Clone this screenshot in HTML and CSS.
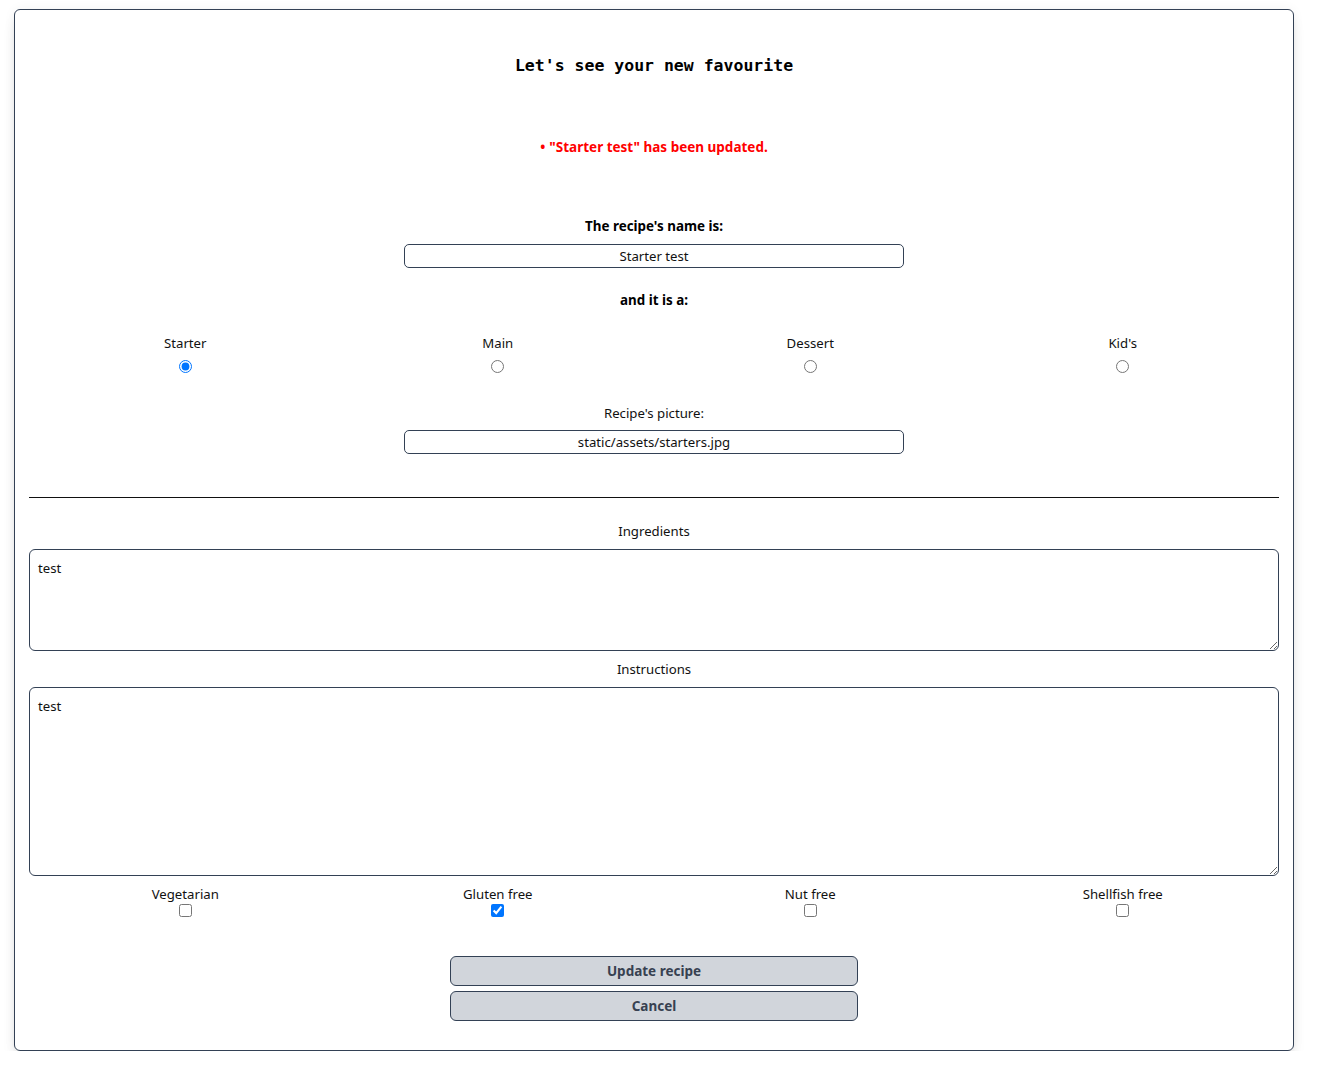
FILE: index.html
```html
<!DOCTYPE html>
<html lang="en">
<head>
<meta charset="utf-8">
<title>Edit recipe</title>
<link rel="stylesheet" href="styles.css">
</head>
<body>
<main class="card">
  <h1 class="title">Let's see your new favourite</h1>
  <ul class="flashes">
    <li>"Starter test" has been updated.</li>
  </ul>
  <form class="form">
    <label class="label bold name-label" for="name">The recipe's name is:</label>
    <input class="text-input" id="name" type="text" value="Starter test">
    <p class="label bold type-label">and it is a:</p>
    <div class="options radios">
      <label class="option"><span>Starter</span><input type="radio" name="type" checked></label>
      <label class="option"><span>Main</span><input type="radio" name="type"></label>
      <label class="option"><span>Dessert</span><input type="radio" name="type"></label>
      <label class="option"><span>Kid's</span><input type="radio" name="type"></label>
    </div>
    <label class="label picture-label" for="pic">Recipe's picture:</label>
    <input class="text-input pic-input" id="pic" type="text" value="static/assets/starters.jpg">
    <hr class="divider">
    <label class="label ing-label" for="ing">Ingredients</label>
    <textarea class="area area-ing" id="ing">test</textarea>
    <label class="label ins-label" for="ins">Instructions</label>
    <textarea class="area area-ins" id="ins">test</textarea>
    <div class="options checks">
      <label class="option"><span>Vegetarian</span><input type="checkbox"></label>
      <label class="option"><span>Gluten free</span><input type="checkbox" checked></label>
      <label class="option"><span>Nut free</span><input type="checkbox"></label>
      <label class="option"><span>Shellfish free</span><input type="checkbox"></label>
    </div>
    <div class="buttons">
      <button type="button" class="btn">Update recipe</button>
      <button type="button" class="btn">Cancel</button>
    </div>
  </form>
</main>
</body>
</html>
```

FILE: styles.css
```css
html, body {
  margin: 0;
  padding: 0;
  background: #ffffff;
}

body {
  font-family: "Noto Sans", "Open Sans", sans-serif;
  font-size: 13.2px;
  color: #111111;
  padding: 9px 0 0 14px;
}

.card {
  box-sizing: border-box;
  width: 1280px;
  height: 1042px;
  border: 1px solid #334155;
  border-radius: 6px;
  padding: 0 14px;
  background: #fff;
  box-shadow: 0 10px 15px -3px rgba(0, 0, 0, 0.1), 0 4px 6px -4px rgba(0, 0, 0, 0.1), 0 0 12px rgba(0, 0, 0, 0.05);
  display: flex;
  flex-direction: column;
}

.title {
  font-family: "DejaVu Sans Mono", "Liberation Mono", monospace;
  font-size: 16.5px;
  font-weight: bold;
  line-height: 24px;
  text-align: center;
  margin: 44px 0 0;
  color: #000;
}

.flashes {
  margin: 59px 0 0;
  padding: 0;
  list-style: none;
  text-align: center;
  color: #ff0000;
  font-weight: bold;
  font-size: 13.5px;
  line-height: 20px;
}

.flashes li::before {
  content: "•";
  margin-right: 4px;
}

.form {
  display: flex;
  flex-direction: column;
  align-items: center;
}

.label {
  display: block;
  line-height: 20px;
  text-align: center;
  margin: 0;
}

.bold {
  font-weight: bold;
  font-size: 13.4px;
  color: #000;
}

.name-label { margin-top: 59px; }
.type-label { margin-top: 22px; }
.picture-label { margin-top: 30px; }
.ing-label { margin-top: 23px; }
.ins-label { margin-top: 8px; }

.text-input {
  box-sizing: border-box;
  width: 500px;
  height: 24px;
  margin-top: 8px;
  border: 1px solid #334155;
  border-radius: 5px;
  text-align: center;
  font-family: inherit;
  font-size: 13.2px;
  color: #111;
  padding: 0 8px;
  background: #fff;
}

.pic-input { margin-top: 7px; }

.options {
  display: grid;
  grid-template-columns: repeat(4, 1fr);
  width: 100%;
}

.radios { margin-top: 23px; }
.checks { margin-top: 8px; }

.option {
  display: flex;
  flex-direction: column;
  align-items: center;
  line-height: 20px;
}

.option input {
  width: 13px;
  height: 13px;
  margin: 0;
}

.radios .option input { margin-top: 7px; }
.checks .option input { margin-top: 0; }

.divider {
  width: 100%;
  margin: 43px 0 0;
  border: 0;
  border-top: 1px solid #111;
  height: 0;
}

.area {
  box-sizing: border-box;
  width: 100%;
  margin-top: 8px;
  border: 1px solid #334155;
  border-radius: 6px;
  padding: 8px;
  font-family: inherit;
  font-size: 13.2px;
  line-height: 20px;
  color: #111;
  background: #fff;
}

.area-ing { height: 102px; }
.area-ins { height: 189px; }

.buttons {
  display: flex;
  flex-direction: column;
  gap: 5px;
  margin-top: 39px;
}

.btn {
  box-sizing: border-box;
  width: 408px;
  height: 30px;
  background: #d1d5db;
  border: 1px solid #334155;
  border-radius: 6px;
  font-family: inherit;
  font-size: 13.5px;
  font-weight: bold;
  color: #374151;
  padding: 0;
}
```
